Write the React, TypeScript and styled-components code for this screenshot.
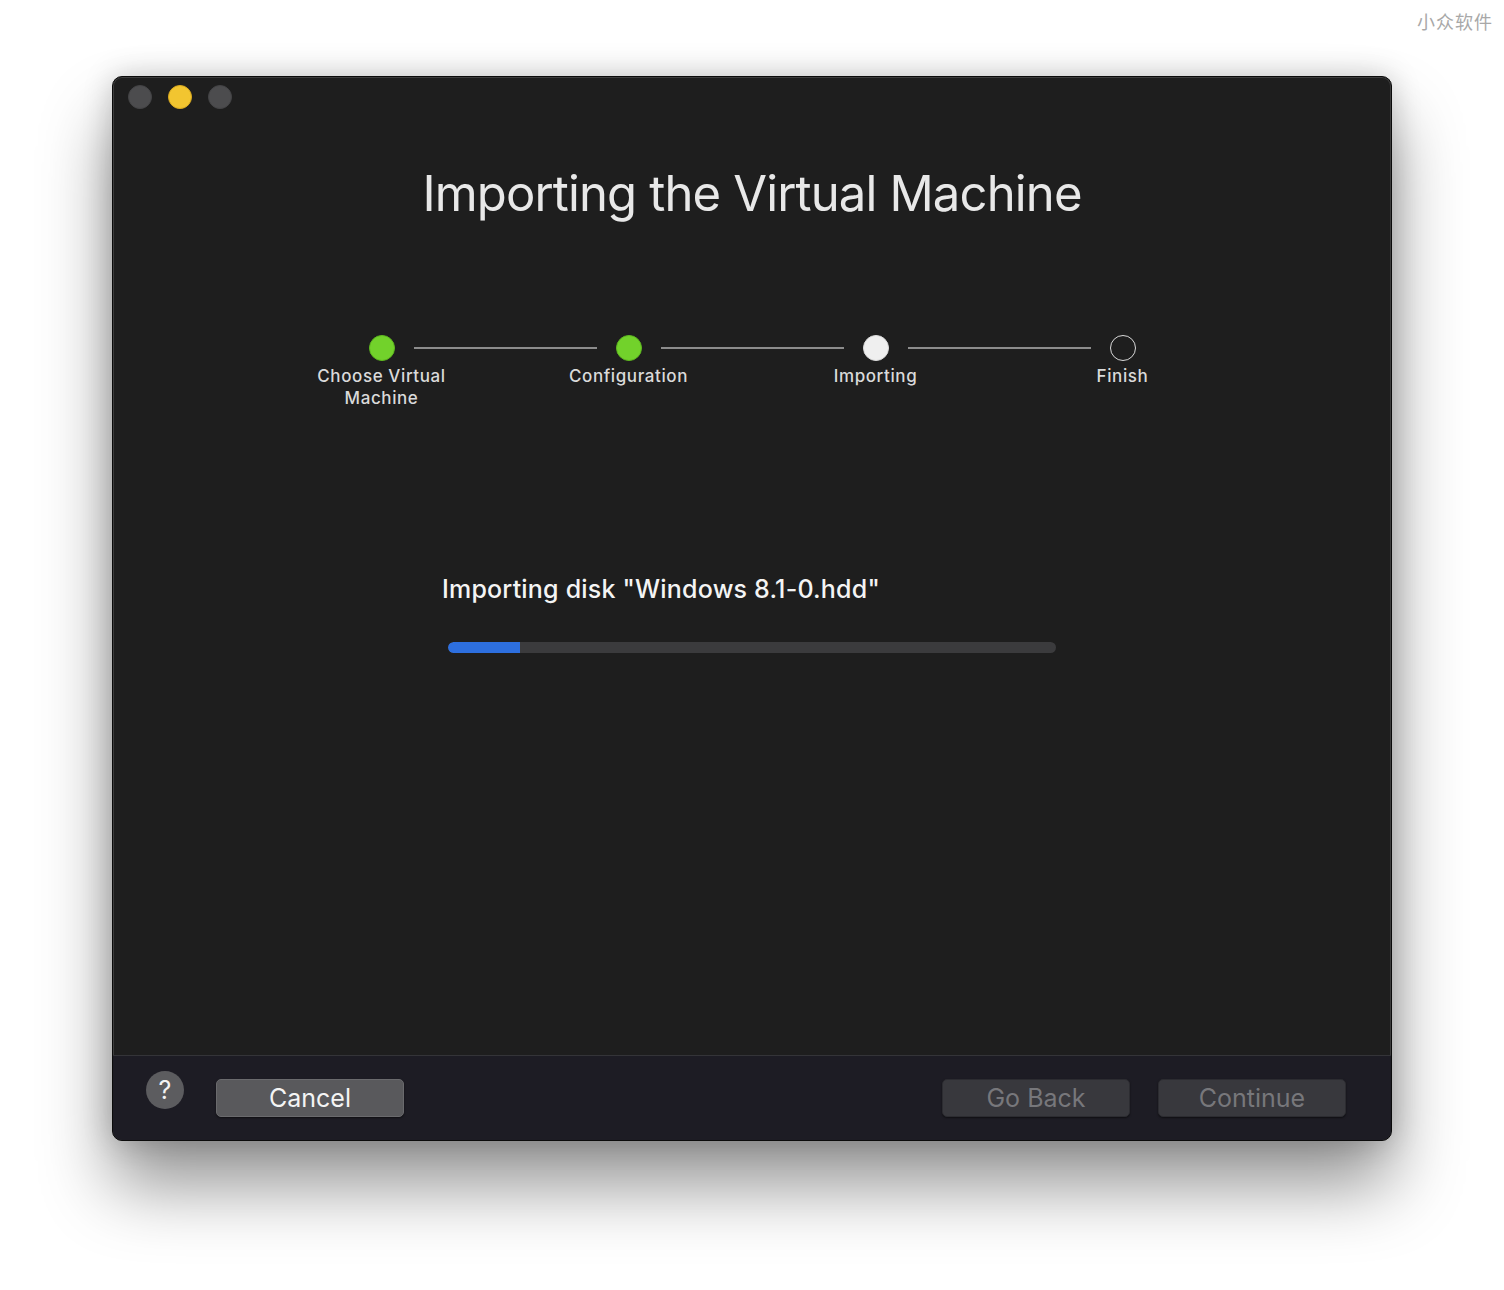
import React from 'react';
import styled, { createGlobalStyle } from 'styled-components';

const GlobalStyle = createGlobalStyle`
  html, body {
    margin: 0;
    padding: 0;
    background: #ffffff;
  }
  body {
    font-family: Inter, "Noto Sans", "Liberation Sans", sans-serif;
    -webkit-font-smoothing: antialiased;
  }
`;

const Page = styled.div`
  position: relative;
  width: 1504px;
  height: 1290px;
  box-sizing: border-box;
  padding: 76px 0 0 112px;
`;

const Watermark = styled.div`
  position: absolute;
  top: 8px;
  right: 11px;
  font-family: "Noto Sans CJK SC", "Noto Sans", sans-serif;
  font-size: 18px;
  color: #a8a8a8;
  letter-spacing: 1px;
`;

const Window = styled.div`
  width: 1280px;
  height: 1065px;
  box-sizing: border-box;
  display: flex;
  flex-direction: column;
  background: #1e1e1e;
  border: 1px solid #0b0b0b;
  border-radius: 10px;
  overflow: hidden;
  box-shadow: inset 0 0 0 1px rgba(255, 255, 255, 0.14),
    0 45px 70px rgba(0, 0, 0, 0.42), 0 0 30px rgba(0, 0, 0, 0.2);
`;

const TitleBar = styled.div`
  display: flex;
  gap: 16px;
  padding: 8px 0 0 15px;
  height: 44px;
  box-sizing: border-box;
`;

const Light = styled.div<{ $color: string; $edge: string }>`
  width: 24px;
  height: 24px;
  border-radius: 50%;
  box-sizing: border-box;
  background: ${({ $color }) => $color};
  border: 1px solid ${({ $edge }) => $edge};
`;

const Content = styled.div`
  flex: 1;
  display: flex;
  flex-direction: column;
  align-items: center;
`;

const Title = styled.h1`
  margin: 43px 0 0;
  font-size: 49px;
  line-height: 60px;
  font-weight: 400;
  color: #e8e8e8;
  letter-spacing: -0.85px;
`;

const Steps = styled.div`
  display: flex;
  align-items: flex-start;
  margin-top: 111px;
`;

const Step = styled.div`
  width: 26px;
  display: flex;
  flex-direction: column;
  align-items: center;
`;

const Dot = styled.div<{ $state: 'done' | 'current' | 'todo' }>`
  width: 26px;
  height: 26px;
  border-radius: 50%;
  box-sizing: border-box;
  background: ${({ $state }) =>
    $state === 'done' ? '#72d22b' : $state === 'current' ? '#efefef' : 'transparent'};
  border: ${({ $state }) =>
    $state === 'done'
      ? '1px solid #5fb91f'
      : $state === 'current'
        ? '1px solid #dcdcdc'
        : '1.5px solid #d8d8d8'};
`;

const StepLabel = styled.div`
  margin-top: 4px;
  white-space: nowrap;
  text-align: center;
  font-size: 17px;
  line-height: 22px;
  font-weight: 500;
  color: #dadada;
  letter-spacing: 0.6px;
`;

const Connector = styled.div`
  width: 183px;
  height: 2px;
  margin: 12px 19px 0 19px;
  background: #8c8c8c;
`;

const Progress = styled.div`
  width: 608px;
  margin: 163px 0 0 0;
  display: flex;
  flex-direction: column;
`;

const DiskLabel = styled.div`
  margin-left: -6px;
  font-size: 25px;
  line-height: 34px;
  font-weight: 500;
  color: #f4f4f4;
  letter-spacing: 0.2px;
`;

const Track = styled.div`
  margin-top: 36px;
  height: 11px;
  border-radius: 6px;
  background: #3b3b3d;
  overflow: hidden;
`;

const Fill = styled.div`
  height: 100%;
  background: #2d6fdf;
  border-radius: 6px 0 0 6px;
`;

const Footer = styled.div`
  height: 85px;
  box-sizing: border-box;
  display: flex;
  align-items: center;
  padding: 0 45px 0 33px;
  background: #1d1c24;
  border-top: 1px solid #343438;
`;

const Help = styled.div`
  width: 38px;
  height: 38px;
  border-radius: 50%;
  background: #5c5c5f;
  color: #f2f2f2;
  display: flex;
  align-items: center;
  justify-content: center;
  font-size: 25px;
  font-weight: 400;
  margin-top: -16px;
`;

const Button = styled.button<{ $disabled?: boolean }>`
  width: 188px;
  height: 38px;
  border-radius: 5px;
  border: 1px solid ${({ $disabled }) => ($disabled ? '#2c2c31' : '#6a6a6d')};
  background: ${({ $disabled }) => ($disabled ? '#38383d' : '#59595c')};
  color: ${({ $disabled }) => ($disabled ? '#77777b' : '#f4f4f4')};
  font-family: Inter, "Noto Sans", "Liberation Sans", sans-serif;
  font-size: 25px;
  font-weight: 400;
  padding: 0;
  box-shadow: 0 1px 2px rgba(0, 0, 0, 0.5);
`;

const Left = styled.div`
  display: flex;
  align-items: center;
  gap: 32px;
`;

const Right = styled.div`
  margin-left: auto;
  display: flex;
  gap: 28px;
`;

const steps: { label: React.ReactNode; state: 'done' | 'current' | 'todo' }[] = [
  { label: <>Choose Virtual<br />Machine</>, state: 'done' },
  { label: 'Configuration', state: 'done' },
  { label: 'Importing', state: 'current' },
  { label: 'Finish', state: 'todo' },
];

export default function App() {
  const progress = 0.118;
  return (
    <>
      <GlobalStyle />
      <Page>
        <Watermark>小众软件</Watermark>
        <Window>
          <TitleBar>
            <Light $color="#4c4c4e" $edge="#444446" />
            <Light $color="#f2c530" $edge="#d9a91f" />
            <Light $color="#4c4c4e" $edge="#444446" />
          </TitleBar>
          <Content>
            <Title>Importing the Virtual Machine</Title>
            <Steps>
              {steps.map((s, i) => (
                <React.Fragment key={i}>
                  {i > 0 && <Connector />}
                  <Step>
                    <Dot $state={s.state} />
                    <StepLabel>{s.label}</StepLabel>
                  </Step>
                </React.Fragment>
              ))}
            </Steps>
            <Progress>
              <DiskLabel>Importing disk "Windows 8.1-0.hdd"</DiskLabel>
              <Track>
                <Fill style={{ width: `${progress * 100}%` }} />
              </Track>
            </Progress>
          </Content>
          <Footer>
            <Left>
              <Help>?</Help>
              <Button>Cancel</Button>
            </Left>
            <Right>
              <Button $disabled>Go Back</Button>
              <Button $disabled>Continue</Button>
            </Right>
          </Footer>
        </Window>
      </Page>
    </>
  );
}
